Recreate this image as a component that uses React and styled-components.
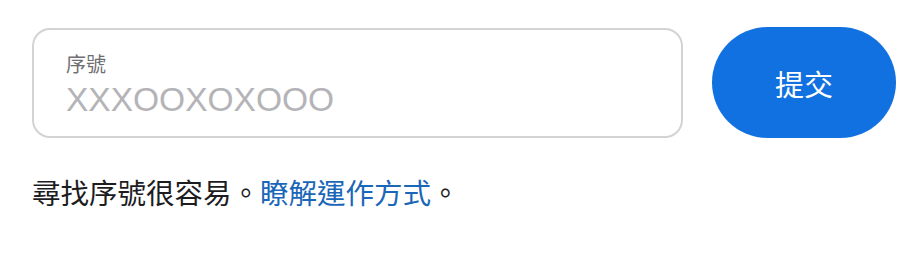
import React from "react";
import styled, { createGlobalStyle } from "styled-components";

const Global = createGlobalStyle`
  html, body { margin: 0; padding: 0; background: #ffffff; }
  body { font-family: "Noto Sans CJK TC", "Noto Sans", sans-serif; }
`;

const Page = styled.div`
  padding: 27px 28px 0 32px;
  display: flex;
  flex-direction: column;
  gap: 34px;
`;

const FormRow = styled.div`
  display: flex;
  align-items: center;
  gap: 29px;
`;

const Field = styled.label`
  box-sizing: border-box;
  width: 652px;
  height: 110px;
  border: 2px solid #d3d3d5;
  border-radius: 18px;
  padding: 21px 0 0 32px;
  display: flex;
  flex-direction: column;
  gap: 3px;
`;

const FieldLabel = styled.span`
  font-family: "Noto Sans CJK TC", sans-serif;
  font-size: 20px;
  line-height: 26px;
  color: #6e6e73;
`;

const Input = styled.input`
  border: none;
  outline: none;
  padding: 0;
  margin: 0;
  background: transparent;
  width: 560px;
  font-family: "Liberation Sans", Arial, sans-serif;
  font-size: 33.5px;
  line-height: 40px;
  height: 40px;
  color: #1d1d1f;
  &::placeholder {
    color: #b4b4b8;
  }
`;

const SubmitButton = styled.button`
  width: 184px;
  height: 111px;
  border: none;
  border-radius: 56px;
  background: #1271e0;
  color: #ffffff;
  font-family: "Noto Sans CJK TC", sans-serif;
  font-size: 29px;
  display: flex;
  align-items: center;
  justify-content: center;
  padding: 0;
  cursor: pointer;
`;

const Help = styled.p`
  margin: 0;
  font-family: "Noto Sans CJK TC", sans-serif;
  font-size: 28.5px;
  line-height: 40px;
  color: #1d1d1f;
`;

const Link = styled.a`
  color: #1a66b8;
  text-decoration: none;
`;

export default function App() {
  return (
    <>
      <Global />
      <Page>
        <FormRow>
          <Field>
            <FieldLabel>序號</FieldLabel>
            <Input placeholder="XXXOOXOXOOO" />
          </Field>
          <SubmitButton>提交</SubmitButton>
        </FormRow>
        <Help>
          尋找序號很容易。<Link href="#">瞭解運作方式</Link>。
        </Help>
      </Page>
    </>
  );
}
